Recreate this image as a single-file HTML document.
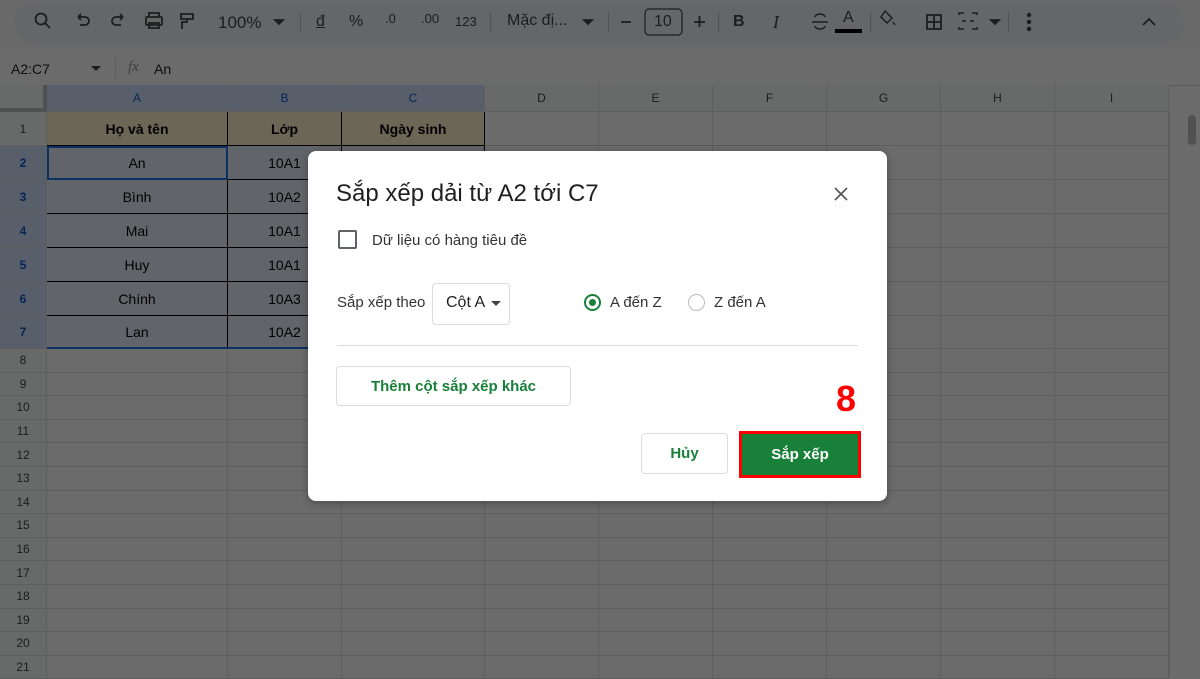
<!DOCTYPE html>
<html><head><meta charset="utf-8"><style>
*{margin:0;padding:0;box-sizing:border-box}
body{width:1200px;height:675px;overflow:hidden;background:#6b6b6b;font-family:"Liberation Sans",Arial,sans-serif;position:relative}
.abs{position:absolute}
#wrap{position:absolute;left:0;top:0;width:1200px;height:675px;background:#fff;filter:brightness(0.42)}
.tb{left:0;top:0;width:1200px;height:50px;background:#f9fbfd}
.tbin{left:14px;top:3px;width:1170px;height:40px;background:#edf2fa;border-radius:20px}
.fb{left:0;top:50px;width:1200px;height:36px;background:#fff}
.cell{position:absolute;border-right:1px solid #e1e1e1;border-bottom:1px solid #e1e1e1;display:flex;align-items:center;justify-content:center;font-size:14px;color:#000}
.hd{font-size:12px;color:#444}
.rh{font-size:12px;color:#444}
.dlg{left:308px;top:151px;width:579px;height:350px;background:#fff;border-radius:8px;box-shadow:0 2px 8px rgba(0,0,0,.3)}
.t{position:absolute;font-size:16px;color:#444}
</style></head><body>
<div id="wrap">
<div class="abs tb"></div><div class="abs tbin"></div>
<svg class="abs" style="left:0;top:0" width="1200" height="48" fill="none" stroke="#444" stroke-width="1.8">
<circle cx="41" cy="19" r="5.5"/><path d="M45 23l5 5"/>
<path d="M78 17h7a4 4 0 010 8h-5M78 17l3-3M78 17l3 3"/>
<path d="M123 17h-7a4 4 0 000 8h5M123 17l-3-3M123 17l-3 3"/>
<rect x="146" y="17" width="16" height="8" rx="1"/><path d="M149 17v-4h10v4M149 23h10v5h-10z"/>
<path d="M181 14h12v5h-12zM187 19v3h-5v7"/>
<path d="M275 20l4 4 4-4z" fill="#444"/>
<g stroke="#c4c7c5" stroke-width="1"><path d="M300.5 12v20M490.5 12v20M608.5 12v20M718.5 12v20M870.5 12v20M1008.5 12v20"/></g>
<path d="M621 22h10M694 22h11M699.5 16v11"/>
<path d="M584 20l4 4 4-4z" fill="#444"/>
<path d="M991 20l4 4 4-4z" fill="#444"/>
<rect x="645" y="9" width="37" height="26" rx="4" stroke-width="1.2"/>
<path d="M812 22h16M815 17a5 3 0 0110 0M815 26a5 3 0 0010 0" stroke-width="1.5"/>
<rect x="927" y="15" width="14" height="14"/><path d="M934 15v14M927 22h14"/>
<path d="M959 15v-2h5M959 27v2h5M977 15v-2h-5M977 27v2h-5M962 21h4M974 21h-4" stroke-width="1.5"/>
<path d="M885 11l7 7-5 5-6-6zM893 22l2 3" stroke-width="1.5"/>
<path d="M1143 25l6-6 6 6"/>
<rect x="835" y="29" width="27" height="4" fill="#000" stroke="none"/>
<circle cx="1029" cy="15" r="1.3" fill="#444"/><circle cx="1029" cy="22" r="1.3" fill="#444"/><circle cx="1029" cy="29" r="1.3" fill="#444"/>
</svg>
<div class="t" style="left:218px;top:13px;font-size:17px">100%</div>
<div class="t" style="left:316px;top:13px;text-decoration:underline">đ</div>
<div class="t" style="left:349px;top:13px">%</div>
<div class="t" style="left:385px;top:11px;font-size:13px">.0</div>
<div class="t" style="left:421px;top:11px;font-size:13px">.00</div>
<div class="t" style="left:455px;top:14px;font-size:13px">123</div>
<div class="t" style="left:507px;top:12px">Mặc đị...</div>
<div class="t" style="left:654px;top:13px">10</div>
<div class="t" style="left:733px;top:13px;font-weight:bold">B</div>
<div class="t" style="left:773px;top:12px;font-style:italic;font-family:'Liberation Serif';font-size:18px">I</div>
<div class="t" style="left:843px;top:9px">A</div>
<div class="abs fb"></div>
<div class="abs" style="left:11px;top:61px;font-size:14px;color:#222">A2:C7</div>
<svg class="abs" style="left:90px;top:64px" width="12" height="8"><path d="M1 2l5 5 5-5z" fill="#444"/></svg>
<div class="abs" style="left:115px;top:57px;width:1px;height:22px;background:#ddd"></div>
<div class="abs" style="left:128px;top:59px;font-size:15px;font-style:italic;font-family:'Liberation Serif';color:#999">fx</div>
<div class="abs" style="left:154px;top:61px;font-size:14px;color:#222">An</div>
<div class="abs" style="left:0;top:85px;width:1200px;height:1px;background:#ddd"></div>
<div id="g"></div>
</div>
<script>
var cols=[47,228,342,485,599,713,827,941,1055,1169],L="ABCDEFGHI",h='';
var rows=[112,146,180,214,248,282,316,349];for(var r=8;r<=21;r++)rows.push(349+(r-7)*23.6);
h+='<div class="cell" style="left:0;top:85px;width:47px;height:27px;background:#f8f9fa;border-right:4px solid #c0c0c0;border-bottom:4px solid #c0c0c0"></div>';
for(var i=0;i<9;i++){var sel=i<3;h+='<div class="cell hd" style="left:'+cols[i]+'px;top:85px;width:'+(cols[i+1]-cols[i])+'px;height:27px;background:'+(sel?'#d3e3fd':'#f8f9fa')+';'+(sel?'color:#0b57d0':'')+'">'+L[i]+'</div>';}
for(var r=0;r<rows.length-1;r++){var y=rows[r],hh=rows[r+1]-y;var selr=r>=1&&r<=6;
h+='<div class="cell rh" style="left:0;top:'+y+'px;width:47px;height:'+hh+'px;background:'+(selr?'#d3e3fd':'#f8f9fa')+';'+(selr?'font-weight:bold;color:#0b57d0':'')+'">'+(r+1)+'</div>';
for(var i=0;i<9;i++){var bg='#fff',t='',st='';
if(r==0&&i<3){bg='#fff2cc';st='font-weight:bold;border-color:#000';t=['Họ và tên','Lớp','Ngày sinh'][i];}
else if(selr&&i<3){bg='#e7eefa';st='border-color:#000';if(i==0)t=['An','Bình','Mai','Huy','Chính','Lan'][r-1];if(i==1)t=['10A1','10A2','10A1','10A1','10A3','10A2'][r-1];}
h+='<div class="cell" style="left:'+cols[i]+'px;top:'+y+'px;width:'+(cols[i+1]-cols[i])+'px;height:'+hh+'px;background:'+bg+';'+st+'">'+t+'</div>';}}
h+='<div class="abs" style="left:47px;top:146px;width:181px;height:34px;border:2px solid #1a73e8"></div>';
h+='<div class="abs" style="left:47px;top:347px;width:438px;height:2px;background:#1a73e8"></div>';
h+='<div class="abs" style="left:1169px;top:112px;width:31px;height:563px;background:#fff;border-left:1px solid #e1e1e1"></div><div class="abs" style="left:1188px;top:115px;width:8px;height:30px;border-radius:4px;background:#c0c0c0"></div>';
document.getElementById('g').innerHTML=h;
</script>
<div class="abs dlg"></div>
<div class="abs" style="left:336px;top:180px;font-size:24px;color:#1f1f1f">Sắp xếp dải từ A2 tới C7</div>
<svg class="abs" style="left:833px;top:186px" width="16" height="16"><path d="M2 2l12 12M14 2L2 14" stroke="#555" stroke-width="1.6"/></svg>
<div class="abs" style="left:338px;top:230px;width:19px;height:19px;border:2px solid #5f6368;border-radius:2px"></div>
<div class="abs" style="left:372px;top:232px;font-size:15px;color:#333">Dữ liệu có hàng tiêu đề</div>
<div class="abs" style="left:337px;top:294px;font-size:15px;color:#333">Sắp xếp theo</div>
<div class="abs" style="left:432px;top:283px;width:78px;height:42px;border:1px solid #dadce0;border-radius:4px"></div>
<div class="abs" style="left:446px;top:294px;font-size:16px;color:#222">Cột A</div>
<svg class="abs" style="left:490px;top:300px" width="12" height="8"><path d="M1 1l5 5 5-5z" fill="#444"/></svg>
<div class="abs" style="left:584px;top:294px;width:17px;height:17px;border:2px solid #188038;border-radius:50%"></div>
<div class="abs" style="left:589px;top:299px;width:7px;height:7px;background:#188038;border-radius:50%"></div>
<div class="abs" style="left:610px;top:294px;font-size:15px;color:#333">A đến Z</div>
<div class="abs" style="left:688px;top:294px;width:17px;height:17px;border:1.5px solid #bbb;border-radius:50%"></div>
<div class="abs" style="left:714px;top:294px;font-size:15px;color:#333">Z đến A</div>
<div class="abs" style="left:337px;top:345px;width:521px;height:1px;background:#dadce0"></div>
<div class="abs" style="left:336px;top:366px;width:235px;height:40px;border:1px solid #dadce0;border-radius:4px;color:#188038;font-weight:bold;font-size:15px;display:flex;align-items:center;justify-content:center">Thêm cột sắp xếp khác</div>
<div class="abs" style="left:836px;top:378px;font-size:36px;font-weight:bold;color:#f00">8</div>
<div class="abs" style="left:641px;top:433px;width:87px;height:41px;border:1px solid #dadce0;border-radius:4px;color:#188038;font-weight:bold;font-size:15px;display:flex;align-items:center;justify-content:center">Hủy</div>
<div class="abs" style="left:739px;top:431px;width:122px;height:47px;border:3px solid #f00;background:#188038;color:#fff;font-weight:bold;font-size:15px;display:flex;align-items:center;justify-content:center">Sắp xếp</div>
</body></html>
